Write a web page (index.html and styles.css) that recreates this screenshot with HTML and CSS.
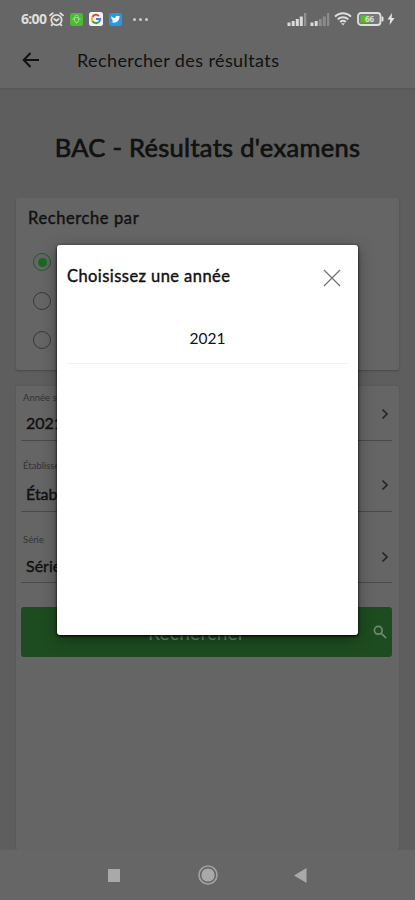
FILE: index.html
```html
<!DOCTYPE html>
<html lang="fr">
<head>
<meta charset="utf-8">
<meta name="viewport" content="width=device-width">
<title>Rechercher des résultats</title>
<link rel="stylesheet" href="styles.css">
</head>
<body>
<div class="screen">
  <div class="status">
    <span class="clock">6:00</span>
    <svg class="alarm" width="15" height="15" viewBox="0 0 15 15" fill="none" stroke="#dedede" stroke-width="1.8" stroke-linecap="round"><circle cx="7.5" cy="8" r="5.2"/><path d="M1 3.4 3.6 1.2M14 3.4l-2.6-2.2M5.2 7l2.3 1.8L9.6 7M3.6 12.2l-1 1.2M11.4 12.2l1 1.2"/></svg>
    <svg class="app" width="13" height="13" viewBox="0 0 13 13"><rect width="13" height="13" rx="2.5" fill="#4dba35"/><path d="M4.5 4.5h4v3a2 2 0 0 1-4 0zM4.7 3.8a1.8 1.6 0 0 1 3.6 0M3.2 5v2.2M9.8 5v2.2M6.5 9v1.5" fill="none" stroke="#98df88" stroke-width="1"/></svg>
    <svg class="app" width="14" height="14" viewBox="0 0 14 14"><rect width="14" height="14" rx="2.5" fill="#f3f3f3"/><g fill="none" stroke-width="2"><path d="M3.4 5A4.1 4.1 0 0 1 10 4.1" stroke="#e34a3e"/><path d="M3.4 9a4.1 4.1 0 0 1 0-4" stroke="#f3b91c"/><path d="M9.8 10A4.1 4.1 0 0 1 3.4 9" stroke="#3ca458"/><path d="M7 7h4.1a4.1 4.1 0 0 1-1.3 3" stroke="#477fe0"/></g></svg>
    <svg class="app" width="13" height="13" viewBox="0 0 13 13"><rect width="13" height="13" rx="2.5" fill="#2797e6"/><path d="M2.4 3.2c1 1.2 2.4 1.8 4 1.9-.4-2 1.9-3.1 3.2-1.8l1.5-.4-.8 1.4c.2 4-4 6.8-8 4.6 1 0 1.8-.2 2.5-.8-1-.1-1.5-.6-1.8-1.4h.8C2.8 6.3 2.3 5.6 2.3 4.8l.6.2c-.8-.6-.9-1.2-.5-1.8z" fill="#fff"/></svg>
    <span class="dots"><i></i><i></i><i></i></span>
    <span class="fill"></span>
    <svg class="sig" width="20" height="13" viewBox="0 0 20 13" fill="#dadada"><path d="M.5 9.5h3V13h-3zM4.7 8h3v5h-3zM8.8 6h3v7h-3zM12.8 3.5h3V13h-3z"/><path d="M17 0h2.3v13H17z" fill="#929292"/></svg>
    <svg class="sig2" width="20" height="13" viewBox="0 0 20 13" fill="#8b8b8b"><path d="M.5 9.5h3V13h-3zM4.7 8h3v5h-3z" fill="#dadada"/><path d="M8.8 6h3v7h-3zM12.8 3.5h3V13h-3zM17 0h2.3v13H17z"/></svg>
    <svg class="wifi" width="18" height="14" viewBox="0 0 18 14" fill="none" stroke="#dedede" stroke-width="2"><path d="M1 4.6a11.5 11.5 0 0 1 16 0M3.7 7.4a7.6 7.6 0 0 1 10.6 0M6.2 10a4 4 0 0 1 5.6 0"/><path d="M7.2 11.200h3.600L9 13.600z" fill="#dedede" stroke="none"/></svg>
    <svg class="batt" width="27" height="14" viewBox="0 0 27 14"><rect x="1" y="1" width="22.5" height="12" rx="3" fill="#777" stroke="#dedede" stroke-width="1.8"/><path d="M3.5 3.3h9.5v7.4H3.5z" fill="#55bd25"/><path d="M24.5 4.5h1q1 0 1 1v3q0 1-1 1h-1z" fill="#dedede"/><text x="8" y="10" class="pct">66</text></svg>
    <svg class="bolt" width="8" height="12" viewBox="0 0 8 12"><path d="M5 0 .5 6.6h2.7L2.6 12 7.5 5H4.6z" fill="#e6e6e6"/></svg>
  </div>
  <header class="appbar">
    <svg width="18" height="16" viewBox="0 0 18 16" fill="none" stroke="#111" stroke-width="2"><path d="M17 8H2M8.5 1 1.7 8l6.8 7"/></svg>
    <span class="bar-title">Rechercher des résultats</span>
  </header>
  <main>
    <h1>BAC - Résultats d'examens</h1>
    <section class="card options">
      <h2>Recherche par</h2>
      <div class="radio on"></div>
      <div class="radio"></div>
      <div class="radio"></div>
    </section>
    <section class="card form">
      <div class="field f1"><label>Année scolaire</label><div class="value">2021</div><svg class="chev" width="8" height="12" viewBox="0 0 8 12"><path d="m1.5 1.5 4.5 4.5-4.5 4.5"/></svg></div>
      <div class="field f2"><label>Établissement</label><div class="value">Établissement</div><svg class="chev" width="8" height="12" viewBox="0 0 8 12"><path d="m1.5 1.5 4.5 4.5-4.5 4.5"/></svg></div>
      <div class="field f3"><label>Série</label><div class="value">Série</div><svg class="chev" width="8" height="12" viewBox="0 0 8 12"><path d="m1.5 1.5 4.5 4.5-4.5 4.5"/></svg></div>
      <div class="submit"><span>Rechercher</span><svg width="14" height="14" viewBox="0 0 14 14" fill="none" stroke="#6d8a6f" stroke-width="1.7"><circle cx="5.3" cy="5.3" r="3.9"/><path d="m8.3 8.3 4.8 4.8"/></svg></div>
    </section>
  </main>
  <nav>
    <svg width="12" height="13" viewBox="0 0 12 13"><path d="M0 0h12v13H0z" fill="#a9a9a9"/></svg>
    <svg width="20" height="20" viewBox="0 0 20 20"><circle cx="10" cy="10" r="9" fill="none" stroke="#a2a2a2" stroke-width="1.6"/><circle cx="10" cy="10" r="6.6" fill="#a9a9a9"/></svg>
    <svg width="13" height="15" viewBox="0 0 13 15"><path d="M12.5 0v15L0 7.5z" fill="#a9a9a9"/></svg>
  </nav>
  <div class="dialog">
    <div class="dialog-head"><span>Choisissez une année</span><svg width="18" height="18" viewBox="0 0 18 18" stroke="#707070" stroke-width="1.2"><path d="m1 1 16 16M17 1 1 17"/></svg></div>
    <div class="year">2021</div>
  </div>
</div>
</body>
</html>
```
FILE: styles.css
```css
* { box-sizing: border-box; }
body { margin: 0; font-family: Lato, "Open Sans", sans-serif; color: #111; }
svg { display: block; flex: none; }
.screen { position: relative; width: 415px; height: 900px; overflow: hidden; display: flex; flex-direction: column; background: #5e5e5e; }
.status { position: relative; z-index: 2; height: 38px; flex: none; background: #666; display: flex; align-items: center; padding: 0 20px 0 21px; }
.clock { font: 700 14px/16px "Open Sans", sans-serif; color: #dedede; width: 28px; letter-spacing: -0.7px; white-space: nowrap; }
.alarm { margin-right: 6px; }
.app { margin-right: 6px; }
.dots { display: flex; gap: 3px; margin-left: 5px; }
.dots i { width: 3px; height: 3px; border-radius: 50%; background: #ccc; }
.fill { flex: 1; }
.sig { margin-right: 3px; }
.sig2 { margin-right: 4px; }
.wifi { margin-right: 5px; }
.batt { margin-right: 3px; }
.pct { font: 700 8px "Open Sans", sans-serif; fill: #ddd; }
.appbar { height: 50px; flex: none; background: #666; display: flex; align-items: center; padding: 0 22px 7px; box-shadow: 0 1px 2px #545454; z-index: 1; }
.bar-title { margin-left: 37px; font-size: 18px; line-height: 24px; letter-spacing: 0.4px; white-space: nowrap; }
main { flex: 1; display: flex; flex-direction: column; padding: 0 16px; }
h1, h2, .value, .dialog-head { font-weight: 400; -webkit-text-stroke: 0.4px currentColor; }
h1 { margin: 0; height: 110px; padding-top: 43px; font-size: 25.5px; line-height: 32px; letter-spacing: 0.3px; -webkit-text-stroke-width: 0.7px; text-align: center; white-space: nowrap; }
.card { background: #656565; border-radius: 2px; }
.options { height: 172px; margin-bottom: 16px; padding: 9px 12px; box-shadow: 0 1px 2px #484848; }
h2 { margin: 0 0 24px; font-size: 16.5px; line-height: 22px; letter-spacing: 0.6px; }
.radio { width: 18px; height: 18px; margin: 0 0 21px 5px; border: 1px solid #393939; border-radius: 50%; display: flex; align-items: center; justify-content: center; }
.on { border-color: #245b27; }
.on::before { content: ""; width: 9px; height: 9px; border-radius: 50%; background: #196a20; }
.form { flex: 1; padding: 0 7px 0 5px; box-shadow: 0 0 2px #525252; }
.field { display: grid; grid-template-columns: 1fr 14px; align-items: center; align-content: start; border-bottom: 1px solid #4a4a4a; }
.field label { grid-column: 1 / 3; padding-left: 2px; font-size: 9.5px; line-height: 12px; color: #333; }
.value { padding-left: 5px; font-size: 16px; line-height: 22px; }
.f1 { height: 55px; padding-top: 6px; row-gap: 8px; }
.f2 { height: 71px; padding-top: 19px; row-gap: 11px; }
.f3 { height: 71px; padding-top: 22px; row-gap: 9px; }
.chev { margin-left: 3px; transform: translateY(-9px); fill: none; stroke: #252525; stroke-width: 1.7; }
.submit { height: 50px; margin-top: 24px; border-radius: 3px; background: #1d4c20; display: flex; align-items: center; padding: 0 5px 0 15px; color: #6d8a6f; font-size: 19px; }
.submit span { flex: 1; padding-right: 16px; text-align: center; letter-spacing: 0.3px; }
nav { height: 50px; flex: none; background: #666; display: flex; align-items: center; padding-left: 108px; }
nav svg + svg { margin-left: 78px; }
nav svg:last-child { margin-left: 76px; }
.dialog { position: absolute; z-index: 2; left: 57px; top: 245px; width: 301px; height: 390px; background: #fff; border-radius: 3px; box-shadow: 0 1px 3px #000, 0 4px 16px rgba(0, 0, 0, 0.35); }
.dialog-head { height: 65px; padding: 0 17px 0 10px; display: flex; align-items: center; justify-content: space-between; font-size: 16.5px; letter-spacing: 0.43px; white-space: nowrap; }
.dialog-head span { padding-bottom: 3px; }
.year { height: 54px; margin: 0 10px 0 10px; padding-top: 17px; text-align: center; font-size: 15.5px; line-height: 22px; border-bottom: 1px solid #f3f3f3; }
```
